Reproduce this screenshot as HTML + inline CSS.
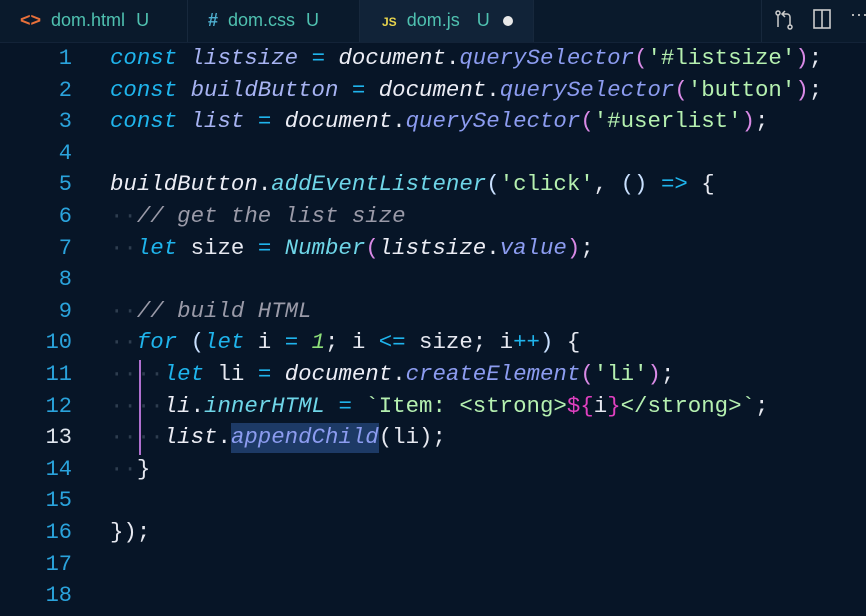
<!DOCTYPE html>
<html><head><meta charset="utf-8"><style>
body{margin:0;width:866px;height:616px;background:#071527;overflow:hidden;font-family:"Liberation Mono",monospace;}
.tabs{position:absolute;left:0;top:0;width:866px;height:42px;background:#0a1a2c;border-bottom:1px solid #132338;font-family:"Liberation Sans",sans-serif;font-size:18px;}
.tab{position:absolute;top:0;height:42px;line-height:40px;color:#4fc1b0;}
.sep{position:absolute;top:0;width:1px;height:42px;background:#17283c}
.ln{position:absolute;left:0;width:72px;text-align:right;font-size:22px;color:#2aa3dc;}
.c{position:absolute;left:110px;font-size:22.4px;white-space:pre;color:#e6e8f0;}
.k{color:#1fb4ec;font-style:italic}.v{color:#a7b3f2;font-style:italic}.d{color:#ecedf5;font-style:italic}
.m{color:#8c9cf0;font-style:italic}.p{color:#d98ae6}.s{color:#b5f0b0}.o{color:#1fb4ec}.cm{color:#9a9aa8;font-style:italic}
.n{color:#8ee07a;font-style:italic}.w{color:#2e3d4f}.g{color:#c9e0ff;}.f{color:#6fd6e8;font-style:italic}
.dol{color:#e040c0}
</style></head><body>
<div class="tabs">
<div class="tab" style="left:20px"><span style="color:#e8703a;font-weight:bold">&lt;&gt;</span>&nbsp; dom.html <span style="margin-left:6px">U</span></div>
<div class="sep" style="left:187px"></div>
<div class="tab" style="left:208px"><span style="color:#4fb0d0;font-weight:bold">#</span>&nbsp; dom.css <span style="margin-left:6px">U</span></div>
<div class="sep" style="left:359px"></div>
<div class="tab" style="left:360px;width:173px;background:#112338;padding-left:22px;box-sizing:border-box"><span style="color:#e8d44d;font-weight:bold;font-size:12px">JS</span>&nbsp; dom.js <span style="margin-left:12px">U</span> <span style="display:inline-block;width:10px;height:10px;border-radius:50%;background:#e8e8e8;margin-left:8px"></span></div>
<div class="sep" style="left:533px"></div>
<div class="sep" style="left:761px"></div>
<svg style="position:absolute;left:772px;top:8px" width="24" height="24" viewBox="0 0 24 24" fill="none" stroke="#ccc" stroke-width="1.5"><circle cx="6" cy="5" r="2"/><circle cx="18" cy="19" r="2"/><path d="M6 7v12M18 17V9a3 3 0 0 0-3-3h-4M13 3l-3 3 3 3"/></svg>
<svg style="position:absolute;left:812px;top:8px" width="20" height="22" viewBox="0 0 20 22" fill="none" stroke="#ccc" stroke-width="1.6"><rect x="2" y="2" width="16" height="18"/><path d="M10 2v18"/></svg>
<div style="position:absolute;left:850px;top:4px;color:#ccc;font-size:18px">···</div>
</div>
<div style="position:absolute;left:139px;top:360px;width:2px;height:95px;background:#b070d0"></div>
<div style="position:absolute;left:231px;top:423px;width:148px;height:30px;background:#1d3a66"></div>
<div class="ln" style="top:46px">1</div><div class="ln" style="top:78px">2</div><div class="ln" style="top:109px">3</div><div class="ln" style="top:141px">4</div><div class="ln" style="top:172px">5</div><div class="ln" style="top:204px">6</div><div class="ln" style="top:236px">7</div><div class="ln" style="top:267px">8</div><div class="ln" style="top:299px">9</div><div class="ln" style="top:330px">10</div><div class="ln" style="top:362px">11</div><div class="ln" style="top:394px">12</div><div class="ln" style="top:425px;color:#e0e6ee">13</div><div class="ln" style="top:457px">14</div><div class="ln" style="top:488px">15</div><div class="ln" style="top:520px">16</div><div class="ln" style="top:552px">17</div><div class="ln" style="top:583px">18</div>
<div class="c" style="top:45px"><span class="k">const</span> <span class="v">listsize</span> <span class="o">=</span> <span class="d">document</span>.<span class="m">querySelector</span><span class="p">(</span><span class="s">'#listsize'</span><span class="p">)</span>;</div>
<div class="c" style="top:77px"><span class="k">const</span> <span class="v">buildButton</span> <span class="o">=</span> <span class="d">document</span>.<span class="m">querySelector</span><span class="p">(</span><span class="s">'button'</span><span class="p">)</span>;</div>
<div class="c" style="top:108px"><span class="k">const</span> <span class="v">list</span> <span class="o">=</span> <span class="d">document</span>.<span class="m">querySelector</span><span class="p">(</span><span class="s">'#userlist'</span><span class="p">)</span>;</div>
<div class="c" style="top:171px"><span class="d">buildButton</span>.<span class="f">addEventListener</span><span class="g">(</span><span class="s">'click'</span>, <span class="g">()</span> <span class="o">=&gt;</span> {</div>
<div class="c" style="top:203px"><span class="w">··</span><span class="cm">// get the list size</span></div>
<div class="c" style="top:235px"><span class="w">··</span><span class="k">let</span> size <span class="o">=</span> <span class="f">Number</span><span class="p">(</span><span class="d">listsize</span>.<span class="m">value</span><span class="p">)</span>;</div>
<div class="c" style="top:298px"><span class="w">··</span><span class="cm">// build HTML</span></div>
<div class="c" style="top:329px"><span class="w">··</span><span class="k">for</span> <span class="g">(</span><span class="k">let</span> i <span class="o">=</span> <span class="n">1</span>; i <span class="o">&lt;=</span> size; i<span class="o">++</span><span class="g">)</span> {</div>
<div class="c" style="top:361px"><span class="w">····</span><span class="k">let</span> li <span class="o">=</span> <span class="d">document</span>.<span class="m">createElement</span><span class="p">(</span><span class="s">'li'</span><span class="p">)</span>;</div>
<div class="c" style="top:393px"><span class="w">····</span><span class="d">li</span>.<span class="f">innerHTML</span> <span class="o">=</span> <span class="s">`Item: &lt;strong&gt;</span><span class="dol">${</span>i<span class="dol">}</span><span class="s">&lt;/strong&gt;`</span>;</div>
<div class="c" style="top:424px"><span class="w">····</span><span class="d">list</span>.<span class="m">appendChild</span>(li);</div>
<div class="c" style="top:456px"><span class="w">··</span>}</div>
<div class="c" style="top:519px">});</div>
</body></html>
